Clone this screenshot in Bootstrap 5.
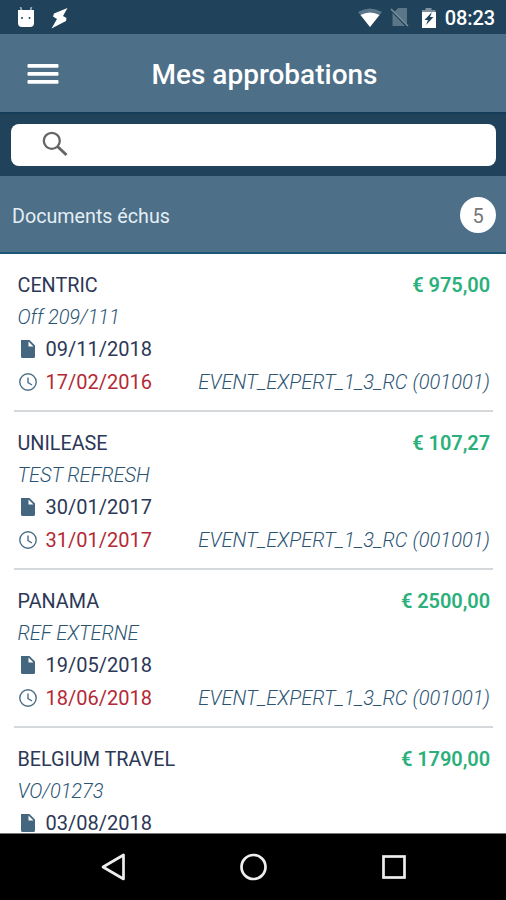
<!DOCTYPE html>
<html lang="fr">
<head>
<meta charset="utf-8">
<meta name="viewport" content="width=device-width, initial-scale=1">
<title>Mes approbations</title>
<link href="https://cdn.jsdelivr.net/npm/bootstrap@5.3.0/dist/css/bootstrap.min.css" rel="stylesheet">
<style>
body{font-family:Roboto,"Liberation Sans",sans-serif;height:900px;color:#2c3856;font-size:20px}
svg{display:block;flex:none}
.status-area{height:34px;background:#20435b;padding:1px 11px 0 16px}
.clock{font-size:20px;font-weight:500;letter-spacing:-.1px;line-height:34px;margin-left:8px}
.sim{margin-left:8px}
.batt{margin-left:11px}
.bolt{margin-left:15px}
.title-bar{height:80px;background:#4d6f88;border-bottom:2px solid #123c57;padding:2px 0 0 27px}
.page-title{font-size:28px;font-weight:500;line-height:40px;margin:2px 0 0 92.5px}
.search-area{height:62px;background:#20435b;padding:10px 10px 0 11px}
.search-box{height:42px;border-radius:8px;padding:0 0 2px 30px}
.group-head{height:78px;background:#4d6f88;border-bottom:2px solid #1d5575;padding:1px 10px 0 12px;color:#e4eef5}
.group-title{font-size:19.7px;padding-top:4px}
.count{width:36px;height:36px;color:#777;font-size:20px;padding-top:2px}
.doc-item{height:158px;padding:15px 3px 0 3px;margin:0 13px 0 14px;border-bottom:2px solid #d5d9db}
.doc-line{height:32px;line-height:32px;white-space:nowrap}
.doc-name{font-size:19.8px;margin-left:.5px;padding-top:1px}
.last-line{padding-top:2px}
.ref-text{color:#2b5473;font-style:italic;font-weight:300}
.event{letter-spacing:.06px}
.ref-code{letter-spacing:-.08px;padding-left:.5px}
.amount{color:#2bb07b;font-weight:600;letter-spacing:-.07px}
.late{color:#b42936}
.date{letter-spacing:0;margin-left:8.500px}
.nav-keys{height:67px;background:#000;border-top:1px solid #777}
</style>
</head>
<body class="d-flex flex-column overflow-hidden bg-white">
<header class="text-white flex-shrink-0">
  <div class="status-area d-flex align-items-center">
    <svg width="20" height="22" viewBox="0 0 20 22" fill="#fff"><path d="M4.500 0L6 5M15.500 0L14 5" fill="none" stroke="#9eb0bd" stroke-width="1.700"/><path d="M2 3h16v13q0 4-4 4H6q-4 0-4-4z"/><circle cx="6" cy="11" r="1" fill="#20435b"/><circle cx="13.500" cy="11" r="1" fill="#20435b"/></svg>
    <svg class="bolt" width="17" height="22" viewBox="0 0 17 22" fill="#fff"><path d="M16.500 1L3 6.500l-1 3 4 2.500L.5 21.500 15 14l.5-3L12 9z"/></svg>
    <svg class="ms-auto" width="24" height="20" viewBox="0 0 24 20"><path d="M0 4Q12-3 24 4L12 19z" fill="#5b7688"/><path d="M2.500 7Q12 2 21.500 7L12 19z" fill="#fff"/></svg>
    <svg class="sim" width="20" height="20" viewBox="0 0 20 20"><path d="M8 0h9v16L4.500 4zM2.500 5L15 18H2.500z" fill="#5b7688"/><path d="M1 1l17 17" stroke="#7d919e" stroke-width="1.500"/></svg>
    <svg class="batt" width="16" height="22" viewBox="0 0 16 22"><path d="M4.500 1h6v2h4v4H1V3h3.500z" fill="#7d919e"/><path d="M1 5h14v16H1z" fill="#fff"/><path d="M11 5L3.500 13H7l-2 5 7.500-8H9z" fill="#20435b"/></svg>
    <span class="clock">08:23</span>
  </div>
  <nav class="title-bar d-flex align-items-center">
    <svg width="32" height="22" viewBox="0 0 32 22" fill="#fff"><rect x=".5" y="1" width="31" height="3.700" rx="1"/><rect x=".5" y="9" width="31" height="3.700" rx="1"/><rect x=".5" y="17" width="31" height="3.700" rx="1"/></svg>
    <h1 class="page-title">Mes approbations</h1>
  </nav>
  <div class="search-area">
    <div class="search-box bg-white d-flex align-items-center">
      <svg width="28" height="28" viewBox="0 0 28 28" fill="none" stroke="#666"><circle cx="10.800" cy="10.800" r="8" stroke-width="2.300"/><path d="M16.500 16.500l9 8.500" stroke-width="3"/></svg>
    </div>
  </div>
</header>
<section class="group-head d-flex align-items-center justify-content-between flex-shrink-0">
  <span class="group-title">Documents échus</span>
  <span class="count bg-white rounded-circle d-flex align-items-center justify-content-center">5</span>
</section>
<svg class="d-none" aria-hidden="true">
  <symbol id="file" viewBox="0 0 20 18"><path d="M4 0h8.500L18 5.500V16.500q0 1.500-1.500 1.500h-11Q4 18 4 16.500zM11.500 1.500v5h5z" fill="#45667f" fill-rule="evenodd"/></symbol>
  <symbol id="time" viewBox="0 0 20 18"><g fill="none" stroke="#4b7088" stroke-width="1.400"><circle cx="11" cy="9" r="8.200"/><path d="M11 4.500V9.500l4 2.500"/></g></symbol>
</svg>
<main class="flex-grow-1 overflow-hidden">
  <article class="doc-item">
    <div class="doc-line d-flex justify-content-between"><span class="doc-name">CENTRIC</span><span class="amount">€ 975,00</span></div>
    <div class="doc-line ref-text ref-code">Off 209/111</div>
    <div class="doc-line d-flex align-items-center"><svg width="20" height="18"><use href="#file"/></svg><span class="date">09/11/2018</span></div>
    <div class="doc-line last-line d-flex align-items-center"><svg width="20" height="18"><use href="#time"/></svg><span class="date late">17/02/2016</span><span class="ref-text event ms-auto">EVENT_EXPERT_1_3_RC (001001)</span></div>
  </article>
  <article class="doc-item">
    <div class="doc-line d-flex justify-content-between"><span class="doc-name">UNILEASE</span><span class="amount">€ 107,27</span></div>
    <div class="doc-line ref-text ref-code">TEST REFRESH</div>
    <div class="doc-line d-flex align-items-center"><svg width="20" height="18"><use href="#file"/></svg><span class="date">30/01/2017</span></div>
    <div class="doc-line last-line d-flex align-items-center"><svg width="20" height="18"><use href="#time"/></svg><span class="date late">31/01/2017</span><span class="ref-text event ms-auto">EVENT_EXPERT_1_3_RC (001001)</span></div>
  </article>
  <article class="doc-item">
    <div class="doc-line d-flex justify-content-between"><span class="doc-name">PANAMA</span><span class="amount">€ 2500,00</span></div>
    <div class="doc-line ref-text ref-code">REF EXTERNE</div>
    <div class="doc-line d-flex align-items-center"><svg width="20" height="18"><use href="#file"/></svg><span class="date">19/05/2018</span></div>
    <div class="doc-line last-line d-flex align-items-center"><svg width="20" height="18"><use href="#time"/></svg><span class="date late">18/06/2018</span><span class="ref-text event ms-auto">EVENT_EXPERT_1_3_RC (001001)</span></div>
  </article>
  <article class="doc-item">
    <div class="doc-line d-flex justify-content-between"><span class="doc-name">BELGIUM TRAVEL</span><span class="amount">€ 1790,00</span></div>
    <div class="doc-line ref-text ref-code">VO/01273</div>
    <div class="doc-line d-flex align-items-center"><svg width="20" height="18"><use href="#file"/></svg><span class="date">03/08/2018</span></div>
  </article>
</main>
<footer class="nav-keys flex-shrink-0 d-flex align-items-center justify-content-center">
  <svg width="306" height="28" viewBox="0 0 306 28" fill="none" stroke="#eee" stroke-width="2.700"><path d="M23.500 2v24L3 14z" stroke-linejoin="round"/><circle cx="153.500" cy="14" r="12"/><rect x="283.500" y="3.500" width="21" height="21"/></svg>
</footer>
<script src="https://cdn.jsdelivr.net/npm/bootstrap@5.3.0/dist/js/bootstrap.bundle.min.js"></script>
</body>
</html>
